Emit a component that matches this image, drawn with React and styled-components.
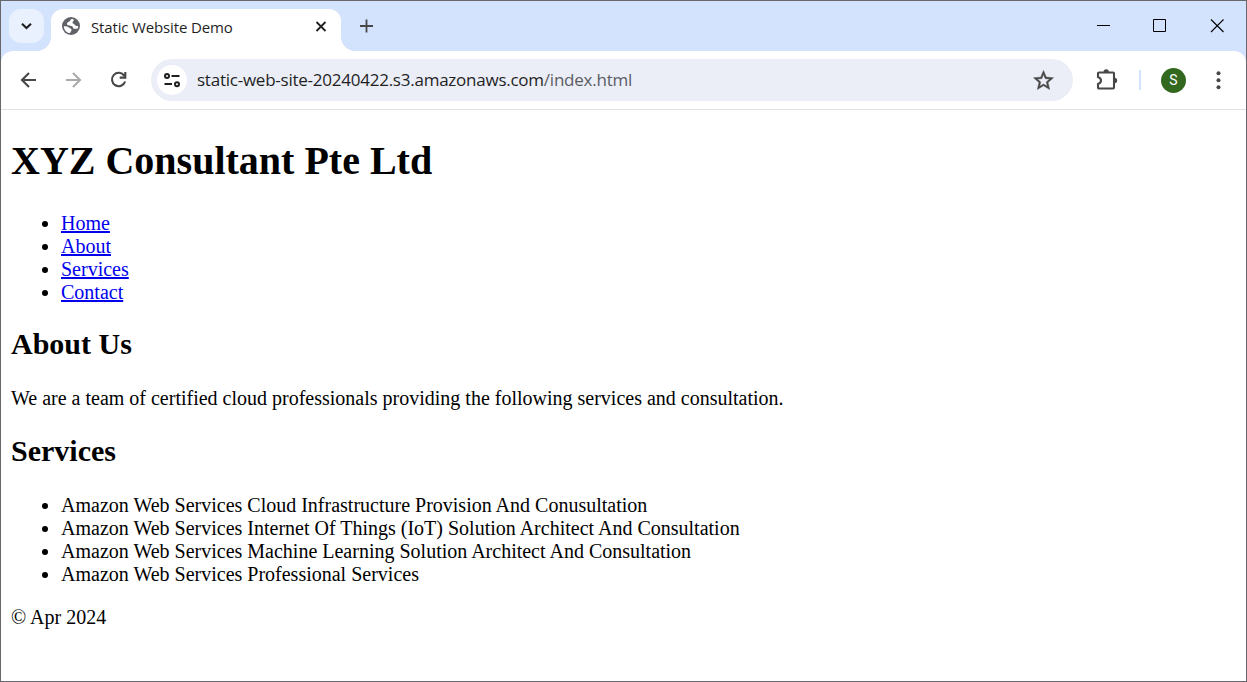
import React from "react";
import styled, { createGlobalStyle } from "styled-components";

const Global = createGlobalStyle`
  * { box-sizing: border-box; }
  body { margin: 0; background: #fff; overflow: hidden; }
`;

const Window = styled.div`
  width: 1247px;
  height: 682px;
  display: flex;
  flex-direction: column;
  border: 1px solid #68686c;
  background: #fff;
  overflow: hidden;
`;

const TabStrip = styled.header`
  height: 50px;
  flex: none;
  display: flex;
  align-items: flex-start;
  padding: 8px 0 0 8px;
  background: #d3e3fd;
`;

const TabSearch = styled.button`
  width: 35px;
  height: 34px;
  flex: none;
  display: grid;
  place-items: center;
  border: 0;
  padding: 0;
  border-radius: 12px;
  background: #e9f1fe;
`;

const Tab = styled.div`
  position: relative;
  width: 290px;
  height: 42px;
  margin-left: 7px;
  padding: 0 13px 6px 10px;
  display: flex;
  align-items: center;
  border-radius: 12px 12px 0 0;
  background: #fff;
  &::before, &::after {
    content: "";
    position: absolute;
    bottom: 0;
    width: 14px;
    height: 14px;
  }
  &::before { left: -14px; background: radial-gradient(circle at 0 0, transparent 13.6px, #fff 14.2px); }
  &::after { right: -14px; background: radial-gradient(circle at 100% 0, transparent 13.6px, #fff 14.2px); }
`;

const TabTitle = styled.span`
  flex: 1;
  margin-left: 10px;
  font: 15px/20px "Open Sans", "Noto Sans", sans-serif;
  letter-spacing: -0.15px;
  color: #1f1f1f;
  white-space: nowrap;
`;

const NewTab = styled.div`
  margin: 10px 0 0 18px;
  display: flex;
`;

const WindowControls = styled.div`
  margin: 9px 21px 0 auto;
  display: flex;
  gap: 40px;
  & > :last-child { margin-left: 2px; }
`;

const ToolbarBack = styled.div`
  flex: none;
  background: #d3e3fd;
`;

const Toolbar = styled.div`
  height: 59px;
  display: flex;
  align-items: center;
  padding: 0 15px 1px 17px;
  background: #fff;
  border-bottom: 1px solid #dfe1e5;
  border-radius: 12px 12px 0 0;
`;

const Nav = styled.nav`
  display: flex;
  gap: 24px;
`;

const AddressBar = styled.div`
  width: 922px;
  height: 42px;
  margin-left: 22px;
  padding: 0 17px 0 6px;
  display: flex;
  align-items: center;
  border-radius: 21px;
  background: #ebeef7;
`;

const SiteInfo = styled.span`
  width: 30px;
  height: 30px;
  display: grid;
  place-items: center;
  border-radius: 50%;
  background: #fff;
`;

const Url = styled.span`
  flex: 1;
  margin-left: 10px;
  padding-top: 1px;
  font: 400 17px/24px "Open Sans", "Noto Sans", sans-serif;
  letter-spacing: -0.24px;
  color: #1f1f1f;
  white-space: nowrap;
`;

const UrlPath = styled.span`
  color: #5a5d62;
`;

const Divider = styled.span`
  width: 2px;
  height: 20px;
  margin: 0 20px 0 20px;
  background: #d3e3fd;
`;

const Avatar = styled.span`
  width: 25px;
  height: 25px;
  margin: 1px 20px 0 0;
  display: grid;
  place-items: center;
  border-radius: 50%;
  background: #33691e;
  color: #fff;
  font: 14px/1 Roboto, sans-serif;
`;

const Extensions = styled.span`
  display: flex;
  margin-left: 22px;
`;

const Page = styled.main`
  flex: 1;
  padding: 0 10px;
  font: 20px/23px "Liberation Serif", "Times New Roman", serif;
  color: #000;
  overflow: hidden;
`;

const Title = styled.h1`
  margin: 27px 0 28px;
  font-size: 40px;
  line-height: 47px;
`;

const Heading = styled.h2`
  margin: ${(p) => p.$top}px 0 26px;
  font-size: 30px;
  line-height: 34px;
`;

const List = styled.ul`
  margin: 20px 0;
  padding-left: 50px;
`;

const Link = styled.a`
  color: #0000ee;
  text-decoration: underline;
`;

const Paragraph = styled.p`
  margin: 20px 0;
`;

function Icon({ size, box = 24, children, ...rest }) {
  return (
    <svg width={size} height={size} viewBox={`0 0 ${box} ${box}`} fill="none" {...rest}>
      {children}
    </svg>
  );
}

const links = ["Home", "About", "Services", "Contact"];
const services = [
  "Amazon Web Services Cloud Infrastructure Provision And Conusultation",
  "Amazon Web Services Internet Of Things (IoT) Solution Architect And Consultation",
  "Amazon Web Services Machine Learning Solution Architect And Consultation",
  "Amazon Web Services Professional Services",
];

export default function App() {
  return (
    <>
      <Global />
      <Window>
        <TabStrip>
          <TabSearch>
            <Icon size={12} box={12}><path d="M1 3.700 5.500 8 10 3.700" stroke="#1f1f1f" strokeWidth="2.100" /></Icon>
          </TabSearch>
          <Tab>
            <Icon size={20} box={20}>
              <circle cx="10" cy="9" r="9" fill="#5f6368" />
              <path d="M11.500 2C9 2 9.800 3.800 8.300 4.500 6 5.500 5.200 6.800 6.700 8.200c1.200 1 3.600.2 4.800 1.200.8.700.2 2.100 1.600 2.300h3.400A7.200 7.200 0 0 0 17.200 9c-1.700.2-2.900-.2-3.400-1.200-.5-1-2.300-.8-2.300-2.300 0-1.200 1.400-1.600 1.500-2.800zM2.800 9.200c2 0 4 .2 5 1.200 1 1 2.700 1 2.700 2.500 0 1.600-1.300 1.500-1.300 3.200C5.500 15.900 2.900 12.800 2.800 9.200z" fill="#fff" />
            </Icon>
            <TabTitle>Static Website Demo</TabTitle>
            <Icon size={14} box={14}><path d="m2.500 2 9 9m0-9-9 9" stroke="#1f1f1f" strokeWidth="1.800" /></Icon>
          </Tab>
          <NewTab>
            <Icon size={15} box={15}><path d="M7.500 .5v13M1 7h13" stroke="#474747" strokeWidth="1.800" /></Icon>
          </NewTab>
          <WindowControls>
            <Icon size={16} box={16}><path d="M2 7.500h13" stroke="#000" /></Icon>
            <Icon size={16} box={16}><path d="M2.500 1.500h12v12h-12z" stroke="#000" /></Icon>
            <Icon size={16} box={16}><path d="m2 1.500 12.500 12.500m0-12.500L2 14" stroke="#000" strokeWidth="1.100" /></Icon>
          </WindowControls>
        </TabStrip>
        <ToolbarBack>
          <Toolbar>
            <Nav>
              <Icon size={21} box={21}><path d="M18 11H4m7-7-7 7 7 7" stroke="#474747" strokeWidth="2.100" /></Icon>
              <Icon size={21} box={21}><path d="M3 11h14m-7-7 7 7-7 7" stroke="#ababab" strokeWidth="2.100" /></Icon>
              <Icon size={21} box={21}><path d="M16.300 6.800A6.700 6.700 0 1 0 17.100 12.500M17.300 3v5.600h-5.600" stroke="#474747" strokeWidth="2.100" /></Icon>
            </Nav>
            <AddressBar>
              <SiteInfo>
                <Icon size={18} box={18}>
                  <g stroke="#1f1f1f" strokeWidth="2">
                    <circle cx="4" cy="5" r="2" /><path d="M8.500 5h8M1.500 13H9" /><circle cx="14" cy="13.300" r="2" />
                  </g>
                </Icon>
              </SiteInfo>
              <Url>static-web-site-20240422.s3.amazonaws.com<UrlPath>/index.html</UrlPath></Url>
              <Icon size={24}><path d="m21.500 9.740-7.190-.620L11.500 2.500 8.690 9.130 1.500 9.740l5.460 4.730L5.320 21.500 11.500 17.770 17.680 21.500l-1.630-7.030L21.500 9.740zM11.500 15.900l-3.760 2.270 1-4.280-3.320-2.880 4.380-.380L11.500 6.600l1.710 4.040 4.380.380-3.320 2.880 1 4.280L11.500 15.900z" fill="#474747" stroke="#474747" strokeWidth=".45" /></Icon>
            </AddressBar>
            <Extensions>
              <Icon size={24}>
                <path d="M4 4.500h14q1 0 1 1v14q0 1-1 1H4q-1 0-1-1v-3.500c4-1.500 4-5.500 0-7V5.500q0-1 1-1z" stroke="#474747" strokeWidth="2.100" />
                <path d="M8.500 4a2.700 2.700 0 0 1 5.400 0zM19.500 9.800a2.700 2.700 0 0 1 0 5.400z" fill="#474747" />
              </Icon>
            </Extensions>
            <Divider />
            <Avatar>S</Avatar>
            <Icon size={24}><g fill="#474747"><circle cx="12.500" cy="5.300" r="2" /><circle cx="12.500" cy="12.300" r="2" /><circle cx="12.500" cy="19.300" r="2" /></g></Icon>
          </Toolbar>
        </ToolbarBack>
        <Page>
          <Title>XYZ Consultant Pte Ltd</Title>
          <List>{links.map((l) => <li key={l}><Link href="#">{l}</Link></li>)}</List>
          <Heading $top={23}>About Us</Heading>
          <Paragraph>We are a team of certified cloud professionals providing the following services and consultation.</Paragraph>
          <Heading $top={24}>Services</Heading>
          <List>{services.map((s) => <li key={s}>{s}</li>)}</List>
          <Paragraph>© Apr 2024</Paragraph>
        </Page>
      </Window>
    </>
  );
}
